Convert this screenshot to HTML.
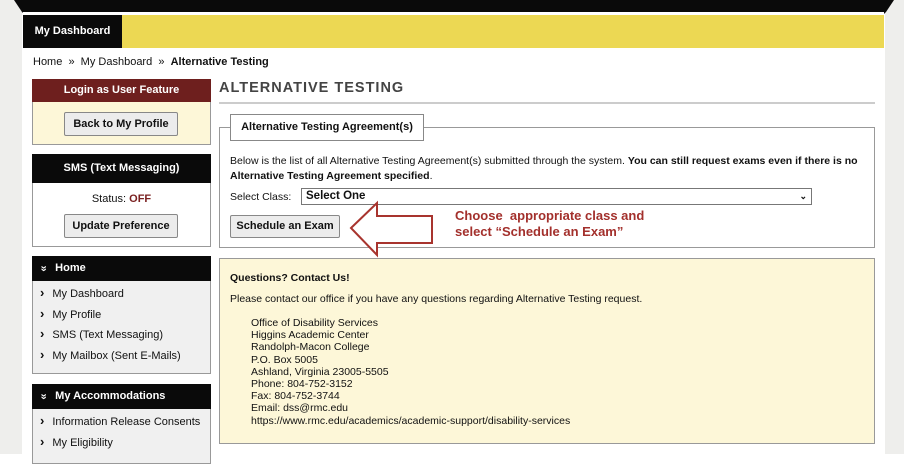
<!DOCTYPE html><html><head><style>
body{margin:0;width:904px;height:454px;overflow:hidden;background:#fff;font-family:"Liberation Sans",Arial,sans-serif;font-size:10.5px;color:#111;position:relative}
.a{position:absolute;white-space:nowrap}
.btn{position:absolute;background:#ececec;border:1px solid #888;border-radius:2px;font-weight:bold;font-size:11px;text-align:center;box-sizing:border-box;white-space:nowrap}
.box{position:absolute;border:1px solid #999;box-sizing:border-box}
.side li{list-style:none;height:20.5px;font-size:11px;white-space:nowrap}
.side li:before{content:"›";font-weight:bold;margin-right:8px;font-size:13px}
.dc{display:inline-block;transform:rotate(90deg);margin-right:6px}
</style></head><body>
<div class="a" style="left:0;top:0;width:22px;height:454px;background:#eeeeec"></div>
<div class="a" style="left:885px;top:0;width:19px;height:454px;background:#eeeeec"></div>
<svg class="a" style="left:0;top:0" width="904" height="16"><polygon points="14,0 894,0 886,12 884,14 24,14 22,12" fill="#0a0a0a"/><rect x="23" y="12" width="861" height="2" fill="#fff"/></svg>
<div class="a" style="left:23px;top:15px;width:861px;height:33px;background:#ecd853"></div>
<div class="a" style="left:23px;top:15px;width:99px;height:33px;background:#0a0a0a;color:#fff;font-weight:bold;font-size:11px;line-height:33px;text-align:center">My Dashboard</div>
<div class="a" style="left:33px;top:56px;font-size:11px">Home &nbsp;» &nbsp;My Dashboard &nbsp;» &nbsp;<b>Alternative Testing</b></div>

<div class="box" style="left:32px;top:79px;width:179px;height:66px;background:#fdf7d8">
<div style="background:#6e1f1e;color:#fff;font-weight:bold;font-size:11px;height:23px;line-height:23px;text-align:center;margin:-1px">Login as User Feature</div></div>
<div class="btn" style="left:64px;top:112px;width:114px;height:24px;line-height:22px">Back to My Profile</div>

<div class="box" style="left:32px;top:154px;width:179px;height:93px">
<div style="background:#0a0a0a;color:#fff;font-weight:bold;font-size:11px;height:29px;line-height:29px;text-align:center;margin:-1px">SMS (Text Messaging)</div>
<div style="text-align:center;margin-top:11px;font-size:11px">Status: <b style="color:#7a2020">OFF</b></div></div>
<div class="btn" style="left:64px;top:214px;width:114px;height:24px;line-height:22px">Update Preference</div>

<div class="box" style="left:32px;top:256px;width:179px;height:118px;background:#f0f0f0">
<div style="background:#0a0a0a;color:#fff;font-weight:bold;font-size:11px;height:25px;line-height:25px;padding-left:8px;margin:-1px"><span class="dc">»</span> Home</div>
<ul class="side" style="margin:5px 0 0;padding-left:7px"><li>My Dashboard</li><li>My Profile</li><li>SMS (Text Messaging)</li><li>My Mailbox (Sent E-Mails)</li></ul></div>
<div class="box" style="left:32px;top:384px;width:179px;height:80px;background:#f0f0f0">
<div style="background:#0a0a0a;color:#fff;font-weight:bold;font-size:11px;height:25px;line-height:25px;padding-left:8px;margin:-1px"><span class="dc">»</span> My Accommodations</div>
<ul class="side" style="margin:5px 0 0;padding-left:7px"><li>Information Release Consents</li><li>My Eligibility</li></ul></div>

<div class="a" style="left:219px;top:80px;font-size:14.5px;font-weight:bold;color:#444;letter-spacing:1px">ALTERNATIVE TESTING</div>
<div class="a" style="left:219px;top:102px;width:656px;height:2px;background:#ccc"></div>
<div class="box" style="left:219px;top:127px;width:656px;height:121px"></div>
<div class="a" style="left:230px;top:114px;width:194px;height:27px;background:#fff;border:1px solid #888;box-sizing:border-box;font-weight:bold;font-size:11px;line-height:25px;text-align:center">Alternative Testing Agreement(s)</div>
<div class="a" style="left:230px;top:154px;line-height:15px;font-size:10.5px">Below is the list of all Alternative Testing Agreement(s) submitted through the system. <b>You can still request exams even if there is no<br>Alternative Testing Agreement specified</b>.</div>
<div class="a" style="left:230px;top:191px">Select Class:</div>
<div class="a" style="left:301px;top:188px;width:511px;height:17px;border:1px solid #777;box-sizing:border-box;font-weight:bold;font-size:11.5px;line-height:15px;padding-left:4px">Select One<span style="position:absolute;right:4px;top:0;font-size:9px">⌄</span></div>
<div class="btn" style="left:230px;top:215px;width:110px;height:23px;line-height:21px">Schedule an Exam</div>
<svg class="a" style="left:340px;top:198px" width="100" height="64"><polygon points="11,30 37,5 37,18 92,18 92,45 37,45 37,57" fill="#fff" stroke="#a8342e" stroke-width="2"/></svg>
<div class="a" style="left:455px;top:208px;color:#a3302c;font-weight:bold;font-size:13px;line-height:16px">Choose &nbsp;appropriate class and<br>select “Schedule an Exam”</div>

<div class="box" style="left:219px;top:258px;width:656px;height:186px;background:#fdf7d8"></div>
<div class="a" style="left:230px;top:272px;font-weight:bold">Questions? Contact Us!</div>
<div class="a" style="left:230px;top:293px">Please contact our office if you have any questions regarding Alternative Testing request.</div>
<div class="a" style="left:251px;top:317px;line-height:12.2px">Office of Disability Services<br>Higgins Academic Center<br>Randolph-Macon College<br>P.O. Box 5005<br>Ashland, Virginia 23005-5505<br>Phone: 804-752-3152<br>Fax: 804-752-3744<br>Email: dss@rmc.edu<br>https://www.rmc.edu/academics/academic-support/disability-services</div>
</body></html>
